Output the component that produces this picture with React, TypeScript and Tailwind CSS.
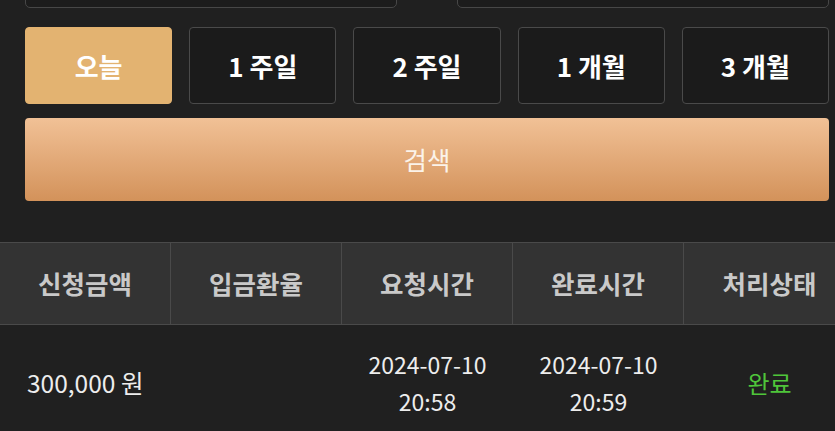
import React from "react";

const font = { fontFamily: '"Noto Sans CJK KR", "Noto Sans", sans-serif' };

export default function App() {
  const periods = ["오늘", "1 주일", "2 주일", "1 개월", "3 개월"];
  const headers = ["신청금액", "입금환율", "요청시간", "완료시간", "처리상태"];
  return (
    <div className="w-[835px] h-[431px] overflow-hidden bg-[#202020]" style={font}>
      <div className="pl-[25px] pr-[6px]">
        <div className="flex justify-between -mt-[50px]">
          <div className="w-[372px] h-[58px] rounded-[5px] border border-[#474747] bg-[#1c1c1c]" />
          <div className="w-[372px] h-[58px] rounded-[5px] border border-[#474747] bg-[#1c1c1c]" />
        </div>
        <div className="mt-[19px] grid grid-cols-5 gap-[17px]">
          {periods.map((p, i) => (
            <div
              key={p}
              className={
                i === 0
                  ? "h-[77px] rounded-[4px] bg-[#e3b371] border border-[#e3b371] flex items-center justify-center text-white font-bold text-[26px]"
                  : "h-[77px] rounded-[4px] bg-[#1b1b1b] border border-[#4a4a4a] flex items-center justify-center text-white font-bold text-[26px]"
              }
            >
              {p}
            </div>
          ))}
        </div>
        <div className="mt-[14px] h-[83px] rounded-[4px] bg-gradient-to-b from-[#f1c196] to-[#d3925a] flex items-center justify-center text-[#fbf3ea] text-[25.5px]">
          검색
        </div>
      </div>
      <div className="mt-[41px] w-[855px]">
        <div className="flex h-[83px] bg-[#333333] border-y border-[#4a4a4a]">
          {headers.map((h, i) => (
            <div
              key={h}
              className={
                i === 4
                  ? "w-[171px] shrink-0 flex items-center justify-center text-[#c9c9c9] font-bold text-[25.5px]"
                  : "w-[171px] shrink-0 border-r border-[#4a4a4a] flex items-center justify-center text-[#c9c9c9] font-bold text-[25.5px]"
              }
            >
              {h}
            </div>
          ))}
        </div>
        <div className="flex h-[116px] items-center text-[#ededed] text-[23px]">
          <div className="w-[171px] shrink-0 pl-[27px] text-[24.5px]">300,000 원</div>
          <div className="w-[171px] shrink-0" />
          <div className="w-[171px] shrink-0 text-center leading-[37px]">
            <div>2024-07-10</div>
            <div>20:58</div>
          </div>
          <div className="w-[171px] shrink-0 text-center leading-[37px]">
            <div>2024-07-10</div>
            <div>20:59</div>
          </div>
          <div className="w-[171px] shrink-0 text-center text-[#4fc53a] text-[24px]">완료</div>
        </div>
      </div>
    </div>
  );
}
